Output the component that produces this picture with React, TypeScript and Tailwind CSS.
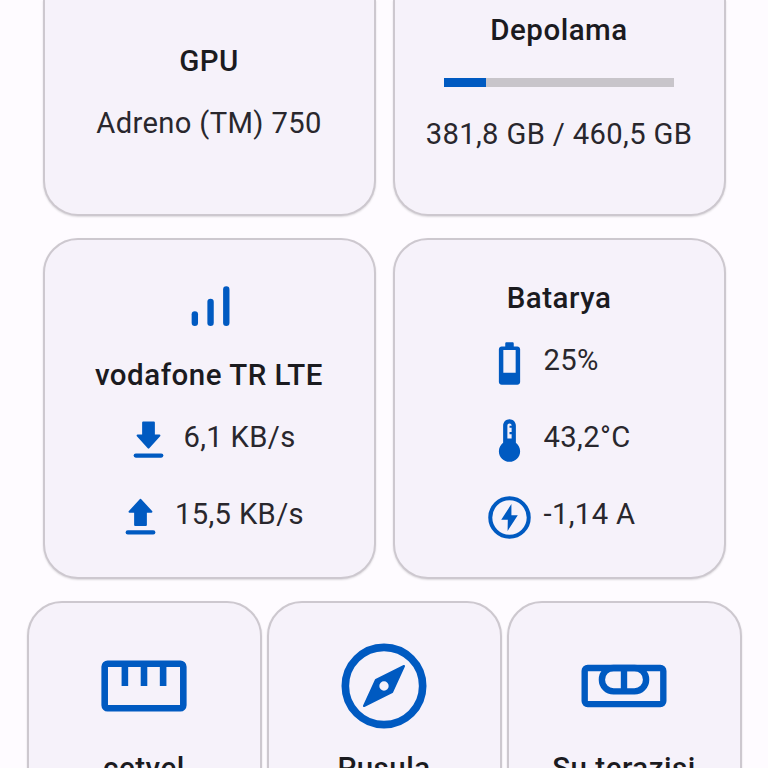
import React from "react";

type IconProps = { className?: string };

function Icon({ className = "size-[51px]", children }: IconProps & { children: React.ReactNode }) {
  return (
    <svg viewBox="0 0 24 24" className={`${className} shrink-0 text-[#005ac1]`} fill="currentColor">
      {children}
    </svg>
  );
}

function SignalIcon() {
  return (
    <Icon>
      <rect x="3.6" y="14.2" width="3" height="7" rx="1.5" />
      <rect x="11" y="8.3" width="3" height="12.9" rx="1.5" />
      <rect x="18.4" y="2.5" width="3" height="18.7" rx="1.5" />
    </Icon>
  );
}

function DownloadIcon() {
  return (
    <Icon>
      <path
        d="M9.5 3.5h5v6.2h2.6L12 15.3 6.9 9.7h2.6z"
        stroke="currentColor"
        strokeWidth="1"
        strokeLinejoin="round"
      />
      <rect x="5" y="18.1" width="14" height="2" rx="1" />
    </Icon>
  );
}

function UploadIcon() {
  return (
    <Icon>
      <path
        d="M9.5 15.5h5V9.3h2.6L12 3.7 6.9 9.3h2.6z"
        stroke="currentColor"
        strokeWidth="1"
        strokeLinejoin="round"
      />
      <rect x="5" y="18" width="14" height="2" rx="1" />
    </Icon>
  );
}

function BatteryIcon() {
  return (
    <Icon>
      <path
        fillRule="evenodd"
        d="M15.67 4H14V2.6c0-.35-.25-.6-.6-.6h-2.8c-.35 0-.6.25-.6.6V4H8.33C7.6 4 7 4.6 7 5.33v15.34C7 21.4 7.6 22 8.33 22h7.34c.73 0 1.33-.6 1.33-1.33V5.33C17 4.6 16.4 4 15.67 4zM9.1 5.7h5.8v10.6H9.1z"
      />
    </Icon>
  );
}

function ThermometerIcon() {
  return (
    <Icon>
      <path d="M15 13V5c0-1.66-1.34-3-3-3S9 3.34 9 5v8c-1.21.91-2 2.37-2 4 0 2.76 2.24 5 5 5s5-2.24 5-5c0-1.63-.79-3.09-2-4zm-4-8c0-.55.45-1 1-1s1 .45 1 1h-1v1h1v2h-1v1h1v2h-2V5z" />
    </Icon>
  );
}

function BoltIcon() {
  return (
    <Icon>
      <circle cx="12" cy="12" r="9.05" fill="none" stroke="currentColor" strokeWidth="1.9" />
      <path d="M12.9 5.7 8.1 13.1h3.1l-.1 5.2 4.8-7.4h-3z" />
    </Icon>
  );
}

function RulerIcon() {
  return (
    <Icon className="size-[102px]">
      <g fill="none" stroke="currentColor" strokeWidth="1.55">
        <rect x="2.75" y="6.75" width="18.5" height="10.5" rx="0.7" />
        <path d="M7.5 7v5M12 7v5M16.5 7v5" />
      </g>
    </Icon>
  );
}

function CompassIcon() {
  return (
    <Icon className="size-[102px]">
      <circle cx="12" cy="12" r="9.1" fill="none" stroke="currentColor" strokeWidth="1.8" />
      <path
        fillRule="evenodd"
        d="M7.3 16.7 10.1 10.6 16.7 7.3 13.9 13.4zM12 10.9a1.1 1.1 0 1 0 0 2.2 1.1 1.1 0 0 0 0-2.2z"
      />
      <path
        d="M7.3 16.7 10.1 10.6 16.7 7.3 13.9 13.4z"
        fill="none"
        stroke="currentColor"
        strokeWidth="0.5"
        strokeLinejoin="round"
      />
    </Icon>
  );
}

function LevelIcon() {
  return (
    <Icon className="size-[102px]">
      <g fill="none" stroke="currentColor" strokeWidth="1.5">
        <rect x="2.75" y="7.75" width="18.5" height="8.5" rx="0.7" />
        <rect x="6.8" y="7.75" width="10.4" height="5.5" rx="2.75" />
        <path d="M12 8v5" />
      </g>
    </Icon>
  );
}

const card =
  "flex flex-col items-center border-2 border-[#cdc8cf] bg-[#f6f2fa] shadow-[0_1px_2px_rgba(0,0,0,0.14)]";

function Title({ children }: { children: React.ReactNode }) {
  return <h2 className="text-[29.5px] leading-10 font-medium tracking-[0.5px] whitespace-nowrap text-[#1b1b1f]">{children}</h2>;
}

function Value({ children }: { children: React.ReactNode }) {
  return <p className="text-[29.2px] leading-10 tracking-[0.35px] whitespace-nowrap text-[#29272d]">{children}</p>;
}

function Row({ icon, children }: { icon: React.ReactNode; children: React.ReactNode }) {
  return (
    <div className="flex h-[77px] items-center gap-[9px]">
      {icon}
      <div className="pb-[7px]">{children}</div>
    </div>
  );
}

const tools = [
  { name: "cetvel", icon: <RulerIcon /> },
  { name: "Pusula", icon: <CompassIcon /> },
  { name: "Su terazisi", icon: <LevelIcon /> },
];

export default function App() {
  const usedPercent = 18.2;

  return (
    <main className="flex h-[768px] w-[768px] flex-col overflow-hidden bg-[#fefbff] font-[Roboto,sans-serif]">
      <section className="flex h-[216px] shrink-0 justify-center gap-[17px]">
        <div className={`${card} w-[333px] rounded-b-[35px] border-t-0 pt-[41px]`}>
          <Title>GPU</Title>
          <div className="mt-[22px]">
            <Value>Adreno (TM) 750</Value>
          </div>
        </div>
        <div className={`${card} w-[333px] rounded-b-[35px] border-t-0 pt-[10px]`}>
          <Title>Depolama</Title>
          <div className="mt-7 h-[9px] w-[230px] bg-[#c8c5ca]">
            <div className="h-full bg-[#005ac1]" style={{ width: `${usedPercent}%` }} />
          </div>
          <div className="mt-[27px]">
            <Value>381,8 GB / 460,5 GB</Value>
          </div>
        </div>
      </section>

      <section className="mt-[22px] flex h-[341px] shrink-0 justify-center gap-[17px]">
        <div className={`${card} w-[333px] rounded-[35px] pt-[41px]`}>
          <SignalIcon />
          <div className="mt-[23px]">
            <Title>vodafone TR LTE</Title>
          </div>
          <div className="mt-[7px] flex flex-col items-center pl-px">
            <Row icon={<DownloadIcon />}>
              <Value>6,1 KB/s</Value>
            </Row>
            <Row icon={<UploadIcon />}>
              <Value>15,5 KB/s</Value>
            </Row>
          </div>
        </div>
        <div className={`${card} w-[333px] rounded-[35px] pt-[38px]`}>
          <Title>Batarya</Title>
          <div className="mt-[7px] flex flex-col items-start pl-px">
            <Row icon={<BatteryIcon />}>
              <Value>25%</Value>
            </Row>
            <Row icon={<ThermometerIcon />}>
              <Value>43,2°C</Value>
            </Row>
            <Row icon={<BoltIcon />}>
              <Value>-1,14 A</Value>
            </Row>
          </div>
        </div>
      </section>

      <section className="mt-[22px] flex h-[240px] shrink-0 justify-center gap-[5px]">
        {tools.map((tool) => (
          <div key={tool.name} className={`${card} w-[235px] rounded-t-[35px] pt-8`}>
            {tool.icon}
            <div className="mt-[11px]">
              <Title>{tool.name}</Title>
            </div>
          </div>
        ))}
      </section>
    </main>
  );
}
